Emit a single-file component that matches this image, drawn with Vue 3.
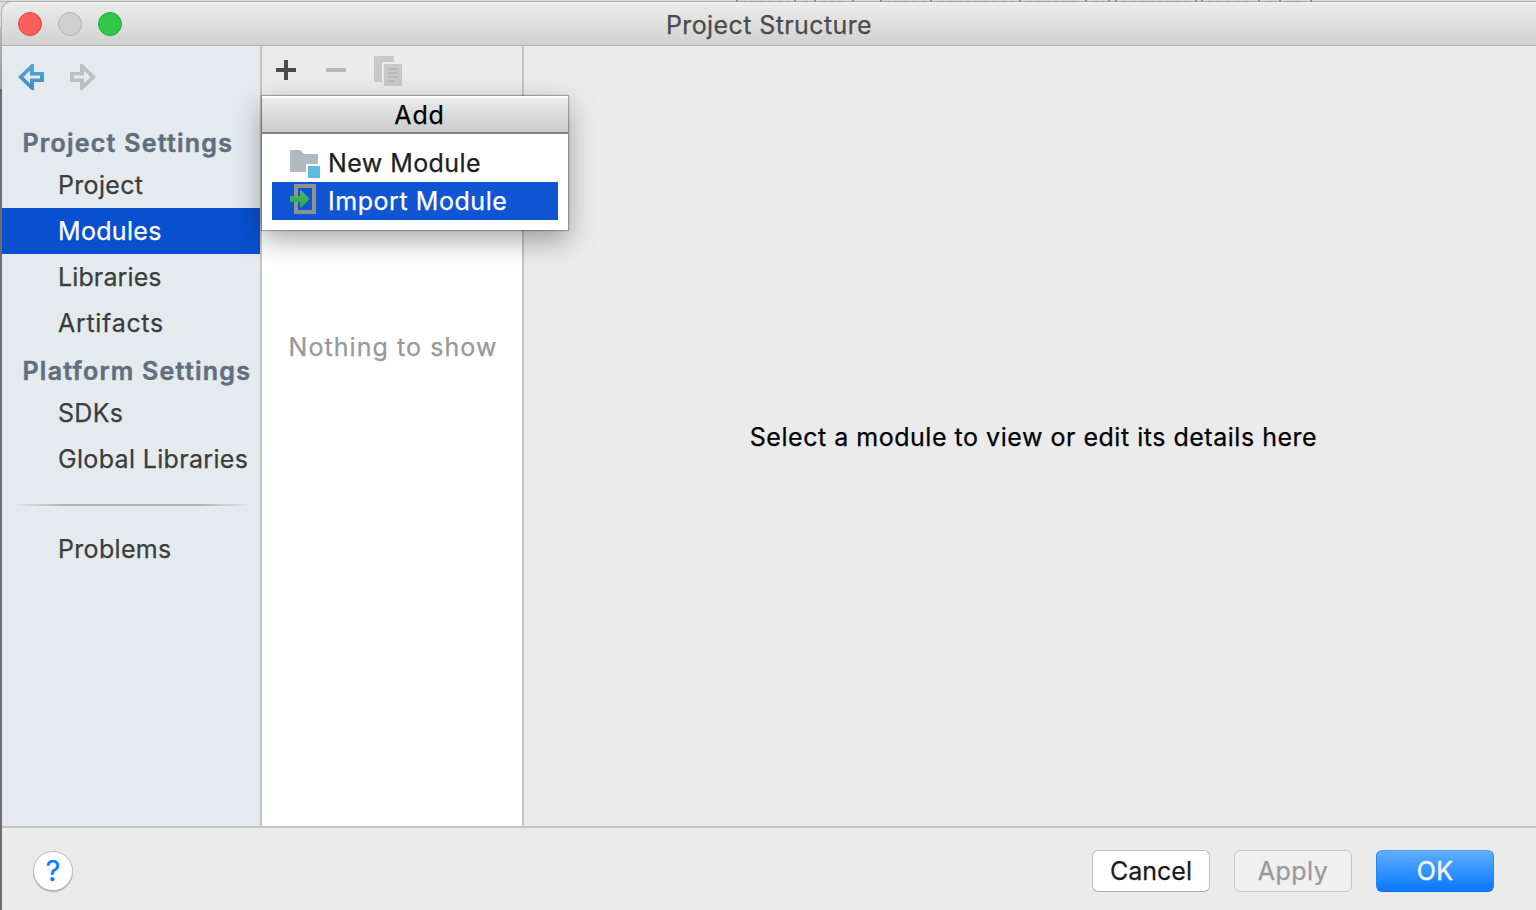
<script setup>
const projectItems = [
  { label: 'Project', ls: 'a1' },
  { label: 'Modules', ls: 'a2', active: true },
  { label: 'Libraries', ls: 'a3' },
  { label: 'Artifacts', ls: 'a4' },
]
const platformItems = [
  { label: 'SDKs', ls: 'a5' },
  { label: 'Global Libraries', ls: 'a6' },
]
</script>

<template>
  <div class="desktop">
    <div class="edge-top"></div>
    <svg class="edge-marks" width="1536" height="2" viewBox="0 0 1536 2">
      <path stroke="#8e8e8e" stroke-width="2" d="M737 0V2M795 0V2M815 0V2M853 0V2M881 0V2M931 0V2M1020 0V2M1086 0V2M1109 0V2M1116 0V2M1196 0V2M1202 0V2M1259 0V2M1280 0V2M1311 0V2" />
      <path stroke="#9c9c9c" stroke-width="1" stroke-dasharray="6 3" d="M741 1.500H790M803 1.500H811M820 1.500H845M885 1.500H926M938 1.500H1014M1026 1.500H1080M1092 1.500H1105M1121 1.500H1191M1207 1.500H1254M1266 1.500H1276M1286 1.500H1306" />
    </svg>
    <div class="edge-left"></div>
    <div class="window">
      <header class="titlebar">
        <div class="lights">
          <i class="light close"></i>
          <i class="light min"></i>
          <i class="light zoom"></i>
        </div>
        <h1 class="title"><span>Project Structure</span></h1>
      </header>

      <main class="body">
        <nav class="sidebar">
          <div class="history">
            <svg width="26" height="26" viewBox="0 0 26 26">
              <defs>
                <linearGradient id="back" x1="0" y1="0" x2="0" y2="1">
                  <stop offset="0" stop-color="#57a9d2" />
                  <stop offset="1" stop-color="#3d8ec4" />
                </linearGradient>
              </defs>
              <path fill="url(#back)" fill-rule="evenodd" d="M0 13 13.500 0H16V8H26V18H16V26H13.500ZM5.500 13 12 19.500V14.500H22V11.500H12V6.500Z" />
            </svg>
            <svg width="26" height="26" viewBox="0 0 26 26">
              <path fill="#bfbfbf" fill-rule="evenodd" d="M26 13 12.500 0H10V8H0V18H10V26H12.500ZM20.500 13 14 19.500V14.500H4V11.500H14V6.500Z" />
            </svg>
          </div>
          <h2 class="group g1"><span>Project Settings</span></h2>
          <a v-for="i in projectItems" :key="i.label" class="item" :class="[i.ls, { active: i.active }]"><span>{{ i.label }}</span></a>
          <h2 class="group g2"><span>Platform Settings</span></h2>
          <a v-for="i in platformItems" :key="i.label" class="item" :class="i.ls"><span>{{ i.label }}</span></a>
          <div class="rule"></div>
          <a class="item a7"><span>Problems</span></a>
        </nav>

        <section class="list">
          <div class="toolbar">
            <svg width="20" height="20" viewBox="0 0 20 20"><path fill="#4a4a4a" d="M8 0h4v8h8v4h-8v8H8v-8H0V8h8z" /></svg>
            <svg class="minus" width="20" height="20" viewBox="0 0 20 20"><path fill="#b9b9b9" d="M0 8h20v4H0z" /></svg>
            <svg class="copy" width="28" height="30" viewBox="0 0 28 30">
              <path fill="#c9c9c9" d="M0 0h20v6H8v20H0zM10 8h18v22H10z" />
              <path fill="#b9b9b9" d="M14 12h10v2H14zM14 16h10v2H14zM14 20h10v2H14zM14 24h6v2h-6z" />
            </svg>
          </div>
          <div class="empty"><span>Nothing to show</span></div>

          <div class="popup">
            <div class="popup-title"><span>Add</span></div>
            <div class="popup-body">
              <div class="option o1">
                <svg width="30" height="28" viewBox="0 0 30 28">
                  <path fill="#afbac0" d="M0 0h10l4 4h14v10H16v8H0z" />
                  <path fill="#59bce2" d="M18 16h12v12H18z" />
                </svg>
                <span>New Module</span>
              </div>
              <div class="option o2 active">
                <svg width="30" height="30" viewBox="0 0 30 30">
                  <defs>
                    <linearGradient id="imp" x1="0" y1="0" x2="0" y2="1">
                      <stop offset="0" stop-color="#4bb865" />
                      <stop offset="1" stop-color="#2fa44c" />
                    </linearGradient>
                  </defs>
                  <path fill="none" stroke="#919191" stroke-width="4" d="M6 12V2h18v26H6V18" />
                  <path fill="url(#imp)" d="M0 12h10V6.500h1.500L19.500 15l-8 8.500H10V18H0z" />
                </svg>
                <span>Import Module</span>
              </div>
            </div>
          </div>
        </section>

        <section class="detail"><span>Select a module to view or edit its details here</span></section>
      </main>

      <footer class="footer">
        <button class="help"><span>?</span></button>
        <div class="actions">
          <button class="btn cancel"><span>Cancel</span></button>
          <button class="btn apply"><span>Apply</span></button>
          <button class="btn ok"><span>OK</span></button>
        </div>
      </footer>
    </div>
  </div>
</template>

<style>
html, body { margin: 0; overflow: hidden; }
</style>

<style scoped>
* { box-sizing: border-box; }
.desktop {
  position: relative;
  width: 1536px; height: 910px; padding: 2px 0 0 2px; overflow: hidden;
  background: #dedede;
  font-family: Inter, "Liberation Sans", sans-serif;
  font-size: 25px; color: #3c3c3c; white-space: nowrap;
}
span { display: inline-block; -webkit-text-stroke: .25px currentColor; }
.edge-top { position: absolute; left: 0; top: 0; width: 100%; height: 2px; background: linear-gradient(#dcdcdc 50%, #b4b4b4 50%); }
.edge-marks { position: absolute; left: 0; top: 0; z-index: 1; }
.edge-left { position: absolute; left: 0; top: 27px; width: 2px; height: 883px; z-index: 1; background: linear-gradient(#b5b5b5, #9c9c9c 62px, #55565a 63px, #6d6d70 66px, #6d6d70); }
.window { position: relative; display: flex; flex-direction: column; height: 908px; border-radius: 10px 0 0 0; background: #ebebeb; box-shadow: 0 0 0 1px #adadad; }
.titlebar { display: grid; grid-template-columns: 1fr; height: 44px; align-items: center; border-radius: 10px 0 0 0; background: linear-gradient(#f4f4f4, #ebebeb 2px, #d2d2d2 42px); border-bottom: 1px solid #b0b0b0; }
.lights { grid-area: 1 / 1; display: flex; gap: 16px; padding-left: 16px; }
.light { width: 24px; height: 24px; border-radius: 50%; border: 1px solid; }
.close { background: #fd605c; border-color: #e2463f; }
.min { background: #d0d0d0; border-color: #b1b1b1; }
.zoom { background: #34c84a; border-color: #22a935; }
.title { grid-area: 1 / 1; margin: 0; padding-top: 2px; text-align: center; font-size: 25px; font-weight: 400; color: #4b4b4b; line-height: 30px; letter-spacing: .4px; }
.body { display: flex; height: 780px; }
.sidebar { width: 258px; flex: none; background: #e5eaee; display: flex; flex-direction: column; }
.history { display: flex; gap: 26px; padding: 18px 0 0 16px; height: 76px; }
.group { margin: 0; padding-left: 20.500px; font-size: 25px; font-weight: 600; color: #5f6f80; line-height: 42px; height: 40px; text-shadow: 0 1px 0 rgba(255,255,255,.7); letter-spacing: 1.240px; }
.group span { -webkit-text-stroke-width: .5px; }
.g2 { height: 44px; line-height: 50px; }
.item { height: 46px; line-height: 46px; padding-left: 56px; letter-spacing: .33px; }
.a3 { letter-spacing: .12px; }
.a4 { letter-spacing: .7px; }
.item.active { background: #0850d0; color: #fff; }
.rule { height: 2px; margin: 22px 8px 20px 10px; background: linear-gradient(90deg, rgba(178,178,178,0), #b2b2b2 22%, #b2b2b2 78%, rgba(178,178,178,0)); }
.list { position: relative; width: 264px; flex: none; background: #fff; border-left: 2px solid #c4c4c4; border-right: 2px solid #c4c4c4; }
.toolbar { height: 50px; background: #ebebeb; display: flex; padding: 14px 0 0 14px; }
.minus { margin-left: 30px; }
.copy { margin: -4px 0 0 28px; }
.empty { margin-top: 230px; padding-left: 2px; text-align: center; color: #999; line-height: 42px; letter-spacing: 1.070px; }
.popup { position: absolute; left: 0; top: 50px; width: 306px; height: 134px; background: rgba(255,255,255,.99); box-shadow: 0 0 1px 1px rgba(0,0,0,.28), 0 10px 26px rgba(0,0,0,.34); z-index: 3; }
.popup-title { height: 38px; padding-left: 9px; line-height: 38px; text-align: center; color: #000; background: linear-gradient(#fff 2px, #ececec 2px, #cbcbcb); border-bottom: 2px solid #858585; letter-spacing: .8px; }
.popup-body { padding: 10px 10px 0; color: #1e1e1e; }
.option { height: 38px; line-height: 38px; display: flex; align-items: flex-start; padding-left: 18px; letter-spacing: .42px; }
.o2 { letter-spacing: .55px; }
.option svg { margin-top: 6px; }
.option.active { background: #1055d3; color: #fff; }
.option.active svg { margin-top: 2px; }
.option span { margin-left: 8px; }
.detail { flex: 1; display: flex; align-items: center; justify-content: center; padding: 2px 0 0 7px; color: #000; letter-spacing: .52px; }
.footer { display: flex; justify-content: space-between; align-items: flex-start; height: 84px; border-top: 2px solid #c4c4c4; padding: 22px 42px 0 31px; }
button { font: inherit; padding: 0; }
.help { width: 40px; height: 40px; margin-top: 1px; border-radius: 50%; border: 1px solid #bebebe; background: #fff; color: #067bff; box-shadow: 0 1px 1px rgba(0,0,0,.25); line-height: 38px; font-size: 29px; }
.actions { display: flex; gap: 24px; }
.btn { width: 118px; height: 42px; border-radius: 6px; border: 1px solid #bdbdbd; border-bottom-color: #acacac; background: #fff; color: #1a1a1a; line-height: 40px; }
.apply { background: #f0f0f0; border-color: #c6c6c6; color: #999; letter-spacing: .45px; }
.ok { background: linear-gradient(#62aefc, #0f7dff 90%); border-color: #4b9df5 #2387fb #0a6cf0; color: #f1f3fa; letter-spacing: .3px; }
.ok span { -webkit-text-stroke-width: .5px; }
</style>
